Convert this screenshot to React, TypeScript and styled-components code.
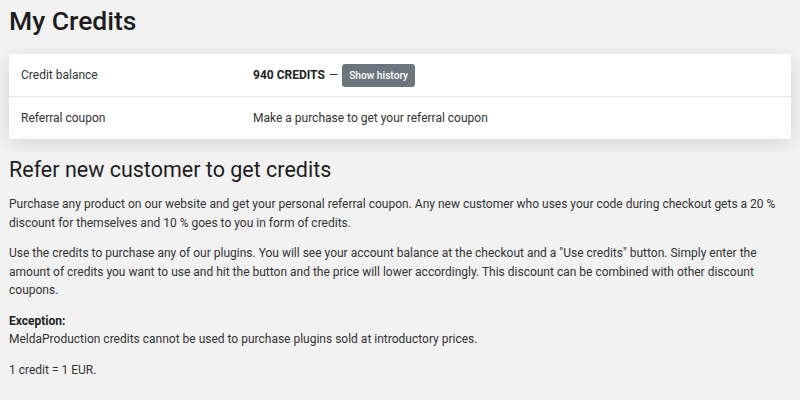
import React from 'react'
import styled, { createGlobalStyle } from 'styled-components'

const GlobalStyle = createGlobalStyle`
  html, body {
    margin: 0;
    padding: 0;
    background: #f2f2f2;
  }
  body {
    font-family: Roboto, "Liberation Sans", Arial, sans-serif;
    color: #222;
  }
`

const Page = styled.div`
  padding: 0 9px;
`

const Title = styled.h1`
  margin: 0;
  padding-top: 4px;
  font-size: 26.5px;
  font-weight: 500;
  line-height: 34px;
  color: #1d1d1d;
`

const Card = styled.div`
  margin-top: 16px;
  background: #fff;
  border-radius: 3px;
  box-shadow: 0 4px 18px rgba(0, 0, 0, 0.12);
`

const Row = styled.div<{ last?: boolean }>`
  display: grid;
  grid-template-columns: 232px 1fr;
  align-items: center;
  height: 42px;
  padding: 0 12px;
  font-size: 12px;
  color: #333;
  border-bottom: ${p => (p.last ? 'none' : '1px solid #e6e6e6')};
`

const Balance = styled.div`
  display: flex;
  align-items: center;
  gap: 4px;
`

const Amount = styled.strong`
  font-weight: 700;
  color: #222;
`

const HistoryButton = styled.button`
  height: 23px;
  padding: 0 7px;
  border: none;
  border-radius: 3px;
  background: #6c757d;
  color: #fff;
  font-family: inherit;
  font-size: 10.2px;
  font-weight: 500;
  cursor: pointer;
`

const Heading = styled.h2`
  margin: 17px 0 0;
  font-size: 21.5px;
  font-weight: 400;
  line-height: 28px;
  color: #1d1d1d;
`

const Para = styled.p`
  margin: 11px 0 0;
  font-size: 12px;
  line-height: 18.5px;
  color: #333;
`

const Spaced = styled(Para)`
  margin-top: 12px;
`

const Label = styled.strong`
  font-weight: 700;
  color: #222;
`

export default function App() {
  return (
    <Page>
      <GlobalStyle />
      <Title>My Credits</Title>
      <Card>
        <Row>
          <span>Credit balance</span>
          <Balance>
            <Amount>940 CREDITS</Amount> —{' '}
            <HistoryButton>Show history</HistoryButton>
          </Balance>
        </Row>
        <Row last>
          <span>Referral coupon</span>
          <span>Make a purchase to get your referral coupon</span>
        </Row>
      </Card>
      <Heading>Refer new customer to get credits</Heading>
      <Para>
        Purchase any product on our website and get your personal referral coupon. Any new customer who uses
        your code during checkout gets a 20 % discount for themselves and 10 % goes to you in form of credits.
      </Para>
      <Spaced>
        Use the credits to purchase any of our plugins. You will see your account balance at the checkout and a
        "Use credits" button. Simply enter the amount of credits you want to use and hit the button and the price
        will lower accordingly. This discount can be combined with other discount coupons.
      </Spaced>
      <Spaced>
        <Label>Exception:</Label>
        <br />
        MeldaProduction credits cannot be used to purchase plugins sold at introductory prices.
      </Spaced>
      <Spaced>1 credit = 1 EUR.</Spaced>
    </Page>
  )
}
